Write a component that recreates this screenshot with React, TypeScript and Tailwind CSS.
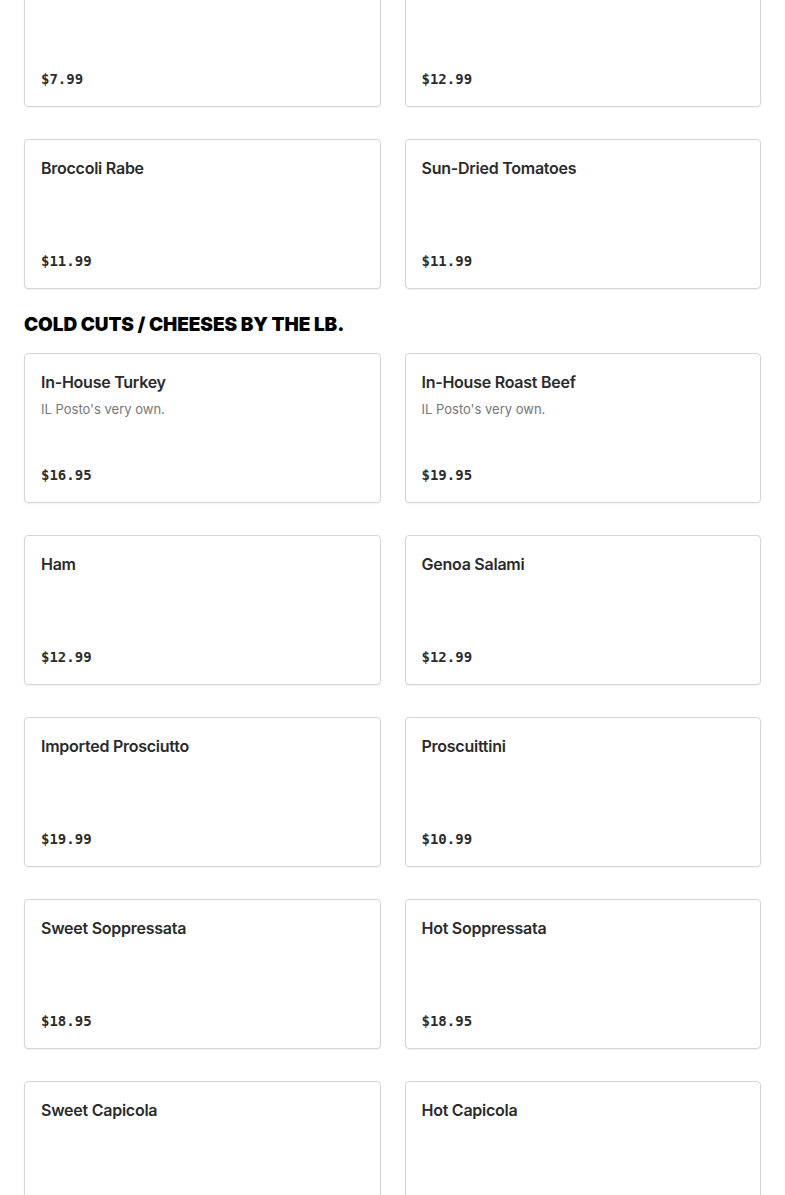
type Item = { name: string; price: string; desc?: string };

const topItems: Item[] = [
  { name: "Roasted Peppers", price: "$7.99" },
  { name: "Fresh Mozzarella", price: "$12.99" },
  { name: "Broccoli Rabe", price: "$11.99" },
  { name: "Sun-Dried Tomatoes", price: "$11.99" },
];

const coldCuts: Item[] = [
  { name: "In-House Turkey", price: "$16.95", desc: "IL Posto's very own." },
  { name: "In-House Roast Beef", price: "$19.95", desc: "IL Posto's very own." },
  { name: "Ham", price: "$12.99" },
  { name: "Genoa Salami", price: "$12.99" },
  { name: "Imported Prosciutto", price: "$19.99" },
  { name: "Proscuittini", price: "$10.99" },
  { name: "Sweet Soppressata", price: "$18.95" },
  { name: "Hot Soppressata", price: "$18.95" },
  { name: "Sweet Capicola", price: "$18.95" },
  { name: "Hot Capicola", price: "$18.95" },
];

const MenuCard = ({ item }: { item: Item }) => (
  <div className="h-[150px] flex flex-col justify-between rounded-[4px] border border-[#d6d6d6] bg-white px-4 pt-4 pb-[15px] shadow-[0_1px_2px_rgba(0,0,0,0.06)]">
    <div>
      <div className="text-[16px] leading-6 font-semibold text-[#2b2b2b] font-['Inter',sans-serif] tracking-[-0.25px]">
        {item.name}
      </div>
      {item.desc && (
        <div className="mt-[5px] text-[13px] leading-5 text-[#767676] font-['Inter',sans-serif]">
          {item.desc}
        </div>
      )}
    </div>
    <div className="text-[14px] leading-6 font-bold text-[#2b2b2b] font-['DejaVu_Sans_Mono',monospace]">
      {item.price}
    </div>
  </div>
);

export default function App() {
  return (
    <div className="h-[1195px] overflow-hidden bg-white">
      <div className="-mt-[43px] px-6">
        <div className="grid grid-cols-2 gap-x-6 gap-y-8">
          {topItems.map((it) => (
            <MenuCard key={it.name} item={it} />
          ))}
        </div>
        <h2 className="mt-[22px] mb-[14px] text-[19px] leading-7 font-black uppercase text-black font-['Inter',sans-serif] tracking-[-0.1px]">
          Cold Cuts / Cheeses by the lb.
        </h2>
        <div className="grid grid-cols-2 gap-x-6 gap-y-8">
          {coldCuts.map((it) => (
            <MenuCard key={it.name} item={it} />
          ))}
        </div>
      </div>
    </div>
  );
}
